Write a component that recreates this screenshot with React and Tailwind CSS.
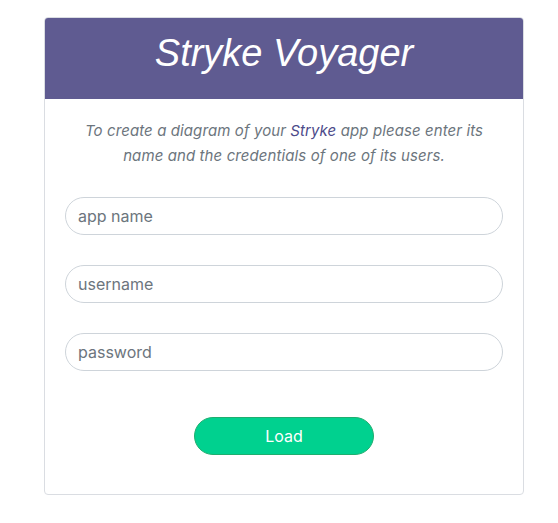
export default function App() {
  return (
    <div className="min-h-[523px] bg-white pt-[17px] pl-[44px]" style={{ fontFamily: 'Inter, "Noto Sans", sans-serif' }}>
      <div className="w-[480px] h-[478px] border border-[#dadde2] rounded-[4px] overflow-hidden flex flex-col">
        <div className="h-[81px] bg-[#5f5b91] flex justify-center pt-[11px]">
          <h1 className="text-[38px] leading-[48px] italic text-white" style={{ fontFamily: '"Liberation Sans", Arial, sans-serif' }}>
            Stryke Voyager
          </h1>
        </div>
        <div className="flex-1 px-[20px] pt-[19px] flex flex-col">
          <p className="text-[15px] leading-[25px] italic text-[#6c757d] text-center px-[18px] tracking-[0.1px]">
            To create a diagram of your <span className="text-[#4d4a8a]">Stryke</span> app please enter its name and the credentials of one of its users.
          </p>
          <div className="mt-[29px] flex flex-col gap-[30px]">
            <input
              className="h-[38px] w-full rounded-full border border-[#ced4da] px-[12px] text-[16px] text-[#495057] placeholder:text-[#6c757d] outline-none"
              placeholder="app name"
            />
            <input
              className="h-[38px] w-full rounded-full border border-[#ced4da] px-[12px] text-[16px] text-[#495057] placeholder:text-[#6c757d] outline-none"
              placeholder="username"
            />
            <input
              className="h-[38px] w-full rounded-full border border-[#ced4da] px-[12px] text-[16px] text-[#495057] placeholder:text-[#6c757d] outline-none"
              placeholder="password"
              type="password"
            />
          </div>
          <div className="mt-[46px] flex justify-center">
            <button className="w-[180px] h-[38px] rounded-full bg-[#00d18f] border border-[#1fae6f] text-white text-[16px]">
              Load
            </button>
          </div>
        </div>
      </div>
    </div>
  );
}
